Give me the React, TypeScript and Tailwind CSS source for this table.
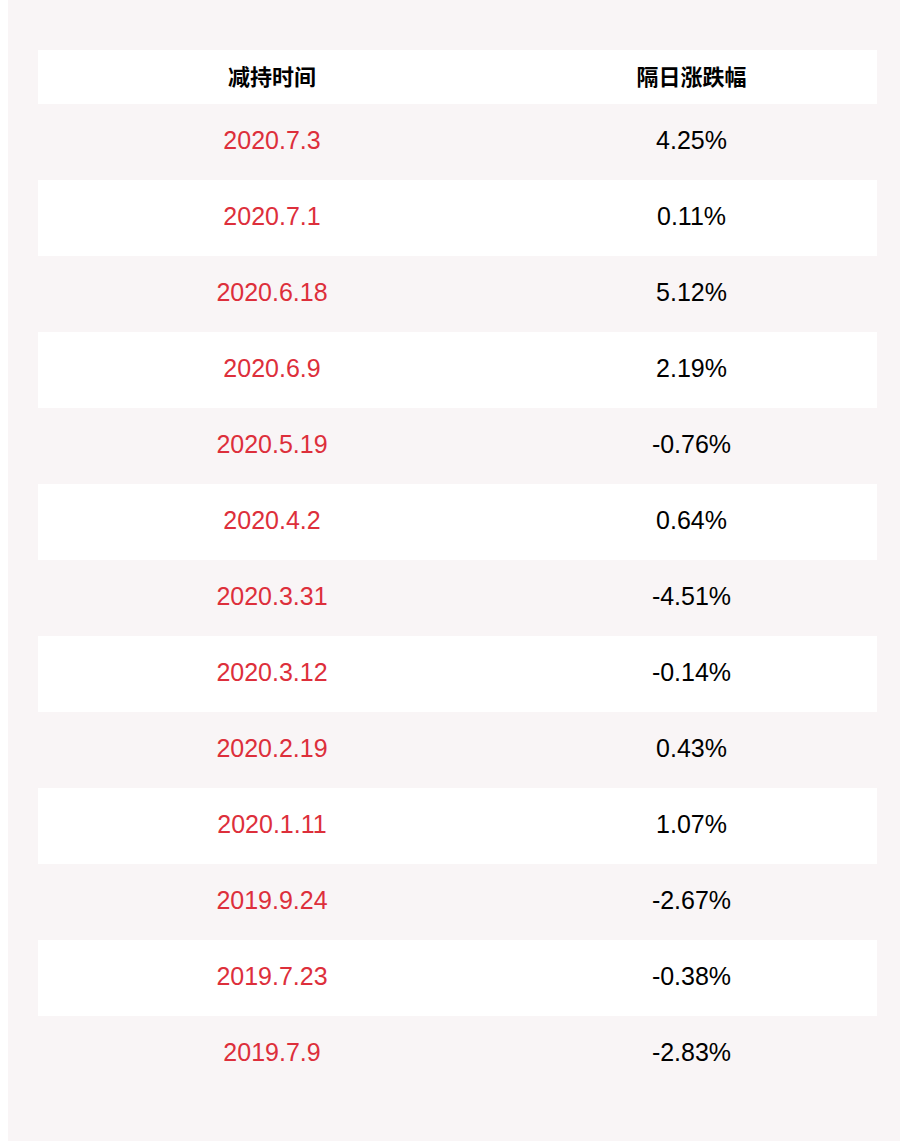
const rows: [string, string][] = [
  ["2020.7.3", "4.25%"],
  ["2020.7.1", "0.11%"],
  ["2020.6.18", "5.12%"],
  ["2020.6.9", "2.19%"],
  ["2020.5.19", "-0.76%"],
  ["2020.4.2", "0.64%"],
  ["2020.3.31", "-4.51%"],
  ["2020.3.12", "-0.14%"],
  ["2020.2.19", "0.43%"],
  ["2020.1.11", "1.07%"],
  ["2019.9.24", "-2.67%"],
  ["2019.7.23", "-0.38%"],
  ["2019.7.9", "-2.83%"],
];

export default function App() {
  return (
    <div className="h-[1142px] w-[900px] bg-white pl-2 [font-family:'Liberation_Sans','Noto_Sans_CJK_SC',sans-serif]">
      <div className="h-[1141px] bg-[#f9f5f6] px-[30px] pt-[50px]">
        <div className="w-[839px]">
          <div className="flex h-[54px] items-center bg-white text-[22px] font-bold text-black">
            <div className="w-[468px] text-center">减持时间</div>
            <div className="flex-1 text-center">隔日涨跌幅</div>
          </div>
          {rows.map(([date, pct], i) => (
            <div
              key={date}
              className={`flex h-[76px] items-center pb-[2px] text-[25px] ${i % 2 === 0 ? "bg-[#f9f5f6]" : "bg-white"}`}
            >
              <div className="w-[468px] text-center text-[#dd2f3b]">{date}</div>
              <div className="flex-1 text-center text-black">{pct}</div>
            </div>
          ))}
        </div>
      </div>
    </div>
  );
}
